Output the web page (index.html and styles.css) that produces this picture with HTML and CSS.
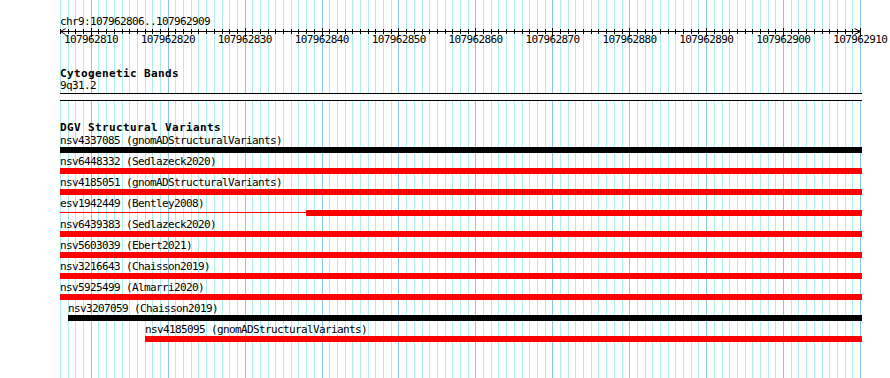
FILE: index.html
```html
<!DOCTYPE html>
<html lang="en">
<head>
    <meta charset="UTF-8">
    <title>chr9:107962806..107962909</title>
    <link rel="stylesheet" href="styles.css">
</head>
<body>
    <div class="panel">
        <!-- background grid: minor line every bp (800px / 104bp), major every 10bp -->
        <svg class="grid" width="890" height="378" shape-rendering="crispEdges">
            <defs>
                <pattern id="grid-minor" x="60" y="0" width="100" height="378" patternUnits="userSpaceOnUse">
                    <rect x="0" width="1" height="378"/><rect x="8" width="1" height="378"/>
                    <rect x="15" width="1" height="378"/><rect x="23" width="1" height="378"/>
                    <rect x="31" width="1" height="378"/><rect x="38" width="1" height="378"/>
                    <rect x="46" width="1" height="378"/><rect x="54" width="1" height="378"/>
                    <rect x="62" width="1" height="378"/><rect x="69" width="1" height="378"/>
                    <rect x="77" width="1" height="378"/><rect x="85" width="1" height="378"/>
                    <rect x="92" width="1" height="378"/>
                </pattern>
            </defs>
            <rect class="grid-minor" x="60" y="0" width="801" height="378"/>
            <path class="grid-major" d="M91.5 0V378M168.5 0V378M245.5 0V378M322.5 0V378M398.5 0V378M475.5 0V378M552.5 0V378M629.5 0V378M706.5 0V378M783.5 0V378M860.5 0V378"/>
        </svg>

        <div class="ruler">
            <div class="ruler-title">chr9:107962806..107962909</div>
            <svg class="axis" width="890" height="9" shape-rendering="crispEdges">
                <defs>
                    <pattern id="tick-minor" x="60" y="0" width="100" height="9" patternUnits="userSpaceOnUse">
                        <rect x="0" y="1" width="1" height="5"/><rect x="8" y="1" width="1" height="5"/>
                        <rect x="15" y="1" width="1" height="5"/><rect x="23" y="1" width="1" height="5"/>
                        <rect x="31" y="1" width="1" height="5"/><rect x="38" y="1" width="1" height="5"/>
                        <rect x="46" y="1" width="1" height="5"/><rect x="54" y="1" width="1" height="5"/>
                        <rect x="62" y="1" width="1" height="5"/><rect x="69" y="1" width="1" height="5"/>
                        <rect x="77" y="1" width="1" height="5"/><rect x="85" y="1" width="1" height="5"/>
                        <rect x="92" y="1" width="1" height="5"/>
                    </pattern>
                </defs>
                <rect x="60" y="0" width="801" height="9" fill="url(#tick-minor)"/>
                <rect x="60" y="3" width="801" height="1"/>
                <path class="tick-major" d="M91.5 0V9M168.5 0V9M245.5 0V9M322.5 0V9M398.5 0V9M475.5 0V9M552.5 0V9M629.5 0V9M706.5 0V9M783.5 0V9M860.5 0V9"/>
                <polyline class="arrow" points="65.5,0.5 60.5,3.5 65.5,6.5" shape-rendering="auto"/>
                <polyline class="arrow" points="854.5,0.5 860.5,3.5 854.5,6.5" shape-rendering="auto"/>
            </svg>
            <div class="ruler-labels">
                <span>107962810</span>
                <span>107962820</span>
                <span>107962830</span>
                <span>107962840</span>
                <span>107962850</span>
                <span>107962860</span>
                <span>107962870</span>
                <span>107962880</span>
                <span>107962890</span>
                <span>107962900</span>
                <span>107962910</span>
            </div>
        </div>

        <div class="track cytobands">
            <div class="track-title">Cytogenetic Bands</div>
            <div class="band-name">9q31.2</div>
            <div class="band"></div>
        </div>

        <div class="track dgv">
            <div class="track-title">DGV Structural Variants</div>

            <div class="feature">
                <div class="feature-label" style="margin-left: 60px">nsv4337085 (gnomADStructuralVariants)</div>
                <div class="glyph"><div class="bar black" style="margin-left: 60px; width: 802px"></div></div>
            </div>
            <div class="feature">
                <div class="feature-label" style="margin-left: 60px">nsv6448332 (Sedlazeck2020)</div>
                <div class="glyph"><div class="bar" style="margin-left: 60px; width: 802px"></div></div>
            </div>
            <div class="feature">
                <div class="feature-label" style="margin-left: 60px">nsv4185051 (gnomADStructuralVariants)</div>
                <div class="glyph"><div class="bar" style="margin-left: 60px; width: 802px"></div></div>
            </div>
            <div class="feature">
                <div class="feature-label" style="margin-left: 60px">esv1942449 (Bentley2008)</div>
                <div class="glyph">
                    <div class="connector" style="margin-left: 60px; width: 246px"></div>
                    <div class="bar" style="width: 556px"></div>
                </div>
            </div>
            <div class="feature">
                <div class="feature-label" style="margin-left: 60px">nsv6439383 (Sedlazeck2020)</div>
                <div class="glyph"><div class="bar" style="margin-left: 60px; width: 802px"></div></div>
            </div>
            <div class="feature">
                <div class="feature-label" style="margin-left: 60px">nsv5603039 (Ebert2021)</div>
                <div class="glyph"><div class="bar" style="margin-left: 60px; width: 802px"></div></div>
            </div>
            <div class="feature">
                <div class="feature-label" style="margin-left: 60px">nsv3216643 (Chaisson2019)</div>
                <div class="glyph"><div class="bar" style="margin-left: 60px; width: 802px"></div></div>
            </div>
            <div class="feature">
                <div class="feature-label" style="margin-left: 60px">nsv5925499 (Almarri2020)</div>
                <div class="glyph"><div class="bar" style="margin-left: 60px; width: 802px"></div></div>
            </div>
            <div class="feature">
                <div class="feature-label" style="margin-left: 68px">nsv3207059 (Chaisson2019)</div>
                <div class="glyph"><div class="bar black" style="margin-left: 68px; width: 794px"></div></div>
            </div>
            <div class="feature">
                <div class="feature-label" style="margin-left: 145px">nsv4185095 (gnomADStructuralVariants)</div>
                <div class="glyph"><div class="bar" style="margin-left: 145px; width: 717px"></div></div>
            </div>
        </div>
    </div>
</body>
</html>
```

FILE: styles.css
```css
/* styles.css */
body {
    margin: 0;
    background-color: #fff;
    color: #000;
    font-family: "DejaVu Sans Mono", monospace;
    font-size: 11px;
    letter-spacing: -0.62px;
}

.panel {
    position: relative;
    z-index: 0;
    width: 890px;
    height: 378px;
    overflow: hidden;
}

.grid {
    position: absolute;
    top: 0;
    left: 0;
    z-index: -1;
}

.grid-minor {
    fill: url(#grid-minor);
}

#grid-minor rect {
    fill: #afeeee;
}

.grid-major {
    stroke: #87c8e8;
    stroke-width: 1;
    fill: none;
}

/* ruler */
.ruler-title {
    padding: 15px 0 0 60px;
    line-height: 13px;
    white-space: nowrap;
}

.axis {
    display: block;
}

.tick-major,
.arrow {
    stroke: #000;
    stroke-width: 1;
    fill: none;
}

.ruler-labels {
    display: flex;
    margin: -4px 0 0 52.5px;
    line-height: 13px;
}

.ruler-labels span {
    flex: 0 0 76.923px;
    text-align: center;
    white-space: nowrap;
}

/* tracks */
.track-title {
    padding-left: 60px;
    font-weight: bold;
    letter-spacing: 0.38px;
    line-height: 13px;
    white-space: nowrap;
}

.cytobands {
    margin-top: 21px;
}

.band-name {
    padding-left: 60px;
    line-height: 12px;
}

.band {
    margin: 1px 0 0 60px;
    width: 802px;
    height: 6px;
    background-color: #fff;
    border-top: 1px solid #000;
    border-bottom: 1px solid #000;
}

.dgv {
    margin-top: 20px;
}

.feature {
    height: 21px;
}

.feature-label {
    line-height: 13px;
    white-space: nowrap;
}

.glyph {
    display: flex;
    align-items: flex-start;
    height: 6px;
}

.bar {
    flex: none;
    height: 6px;
    background-color: #f00;
}

.bar.black {
    background-color: #000;
}

.connector {
    flex: none;
    height: 1px;
    margin-top: 2px;
    background-color: #f00;
}
```
